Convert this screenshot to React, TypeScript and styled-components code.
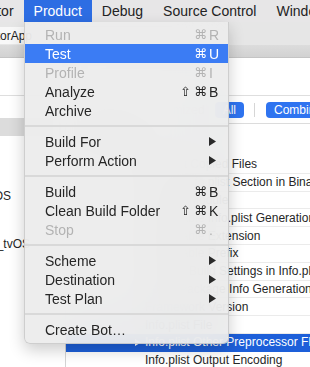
import React from "react";
import styled, { createGlobalStyle } from "styled-components";

const GlobalStyle = createGlobalStyle`
  html, body {
    margin: 0;
    padding: 0;
    background: #fff;
  }
  body {
    font-family: "Liberation Sans", "DejaVu Sans", Arial, sans-serif;
  }
`;

type MenuEntry =
  | "separator"
  | {
      label: string;
      mods?: string[];
      hotkey?: string;
      disabled?: boolean;
      highlighted?: boolean;
      submenu?: boolean;
    };

const productMenu: MenuEntry[] = [
  { label: "Run", mods: ["⌘"], hotkey: "R", disabled: true },
  { label: "Test", mods: ["⌘"], hotkey: "U", highlighted: true },
  { label: "Profile", mods: ["⌘"], hotkey: "I", disabled: true },
  { label: "Analyze", mods: ["⇧", "⌘"], hotkey: "B" },
  { label: "Archive" },
  "separator",
  { label: "Build For", submenu: true },
  { label: "Perform Action", submenu: true },
  "separator",
  { label: "Build", mods: ["⌘"], hotkey: "B" },
  { label: "Clean Build Folder", mods: ["⇧", "⌘"], hotkey: "K" },
  { label: "Stop", mods: ["⌘"], hotkey: ".", disabled: true },
  "separator",
  { label: "Scheme", submenu: true },
  { label: "Destination", submenu: true },
  { label: "Test Plan", submenu: true },
  "separator",
  { label: "Create Bot…" },
];

const settings = [
  "Convert Copied Files",
  "Create Info.plist Section in Binary",
  "Defines Module",
  "Executable Info.plist Generation",
  "Executable Extension",
  "Executable Prefix",
  "Expand Build Settings in Info.plist File",
  "Force Package Info Generation",
  "Framework Version",
  "Info.plist File",
  "Info.plist Other Preprocessor Flags",
  "Info.plist Output Encoding",
];
const selectedSetting = "Info.plist Other Preprocessor Flags";

const SubmenuArrow = () => (
  <svg width="7" height="9" viewBox="0 0 7 9">
    <path d="M0 0 L7 4.5 L0 9 Z" fill="#2a2a2a" />
  </svg>
);

const DisclosureArrow = () => (
  <svg width="6" height="7" viewBox="0 0 6 7">
    <path d="M0 0 L6 3.5 L0 7 Z" fill="#fff" />
  </svg>
);

const App = () => {
  return (
    <>
      <GlobalStyle />
      <Screen>
        <MenuBar>
          <MenuTitle>Editor</MenuTitle>
          <MenuTitle $open>Product</MenuTitle>
          <MenuTitle>Debug</MenuTitle>
          <MenuTitle>Source Control</MenuTitle>
          <MenuTitle>Window</MenuTitle>
        </MenuBar>

        <Toolbar>
          <SchemeField>CalculatorApp</SchemeField>
        </Toolbar>
        <TabBar />

        <Body>
          <TargetList>
            <PaneHeader />
            <TargetRow $selected>
              <TargetName $end={0}>PROJECT</TargetName>
            </TargetRow>
            <TargetRow />
            <TargetRow />
            <TargetRow>
              <TargetName $end={11}>CalculatorApp_macOS</TargetName>
            </TargetRow>
            <TargetRow />
            <TargetRow>
              <TargetName $end={30}>CalculatorApp_tvOS</TargetName>
            </TargetRow>
          </TargetList>

          <SettingsPane>
            <PaneHeader />
            <FilterBar>
              <FilterGroup $width={178}>
                <FilterButton>Basic</FilterButton>
                <FilterButton>Customized</FilterButton>
                <FilterButton $active>All</FilterButton>
              </FilterGroup>
              <FilterDivider />
              <FilterGroup>
                <FilterButton $active>Combined</FilterButton>
                <FilterButton>Levels</FilterButton>
              </FilterGroup>
            </FilterBar>
            <SectionHeader>Packaging</SectionHeader>
            {settings.map((name) => (
              <SettingRow key={name} $selected={name === selectedSetting}>
                <Disclosure>
                  {name === selectedSetting && <DisclosureArrow />}
                </Disclosure>
                {name}
              </SettingRow>
            ))}
          </SettingsPane>
        </Body>

        <Dropdown>
          {productMenu.map((entry, i) =>
            entry === "separator" ? (
              <Separator key={i} />
            ) : (
              <MenuItem
                key={entry.label}
                $disabled={entry.disabled}
                $highlighted={entry.highlighted}
              >
                <ItemLabel>{entry.label}</ItemLabel>
                {entry.hotkey && (
                  <Shortcut>
                    {entry.mods?.map((m) => (
                      <Mod key={m}>{m}</Mod>
                    ))}
                    <Hotkey>{entry.hotkey}</Hotkey>
                  </Shortcut>
                )}
                {entry.submenu && (
                  <ArrowWrap>
                    <SubmenuArrow />
                  </ArrowWrap>
                )}
              </MenuItem>
            )
          )}
        </Dropdown>
      </Screen>
    </>
  );
};

export default App;

const Screen = styled.div`
  position: relative;
  width: 310px;
  height: 367px;
  overflow: hidden;
  background: #fff;
  color: #262626;
`;

const MenuBar = styled.div`
  display: flex;
  height: 22px;
  margin-left: -33px;
  background: #e7e6e7;
  font-size: 14px;
`;

const MenuTitle = styled.div<{ $open?: boolean }>`
  padding: 0 10px;
  line-height: 22px;
  white-space: nowrap;
  color: ${(p) => (p.$open ? "#fff" : "#232323")};
  background: ${(p) => (p.$open ? "#2d6de3" : "transparent")};
`;

const Toolbar = styled.div`
  height: 23px;
  display: flex;
  align-items: flex-end;
  background: #e6e6e6;
`;

const SchemeField = styled.div`
  width: 44px;
  height: 17px;
  margin-bottom: 1px;
  box-sizing: border-box;
  padding-right: 12px;
  display: flex;
  justify-content: flex-end;
  align-items: center;
  overflow: hidden;
  white-space: nowrap;
  background: #f8f8f8;
  border-radius: 0 4px 4px 0;
  font-size: 12px;
  color: #222;
`;

const TabBar = styled.div`
  height: 13px;
  box-sizing: border-box;
  background: linear-gradient(#dcdcdc, #d2d2d2);
  border-bottom: 1px solid #c4c4c4;
`;

const Body = styled.div`
  display: flex;
  height: 309px;
`;

const TargetList = styled.div`
  width: 66px;
  flex: none;
  box-sizing: border-box;
  border-right: 1px solid #d4d4d4;
  display: flex;
  flex-direction: column;
`;

const PaneHeader = styled.div`
  height: 38px;
  flex: none;
  box-sizing: border-box;
  border-bottom: 1px solid #dedede;
`;

const TargetRow = styled.div<{ $selected?: boolean }>`
  height: ${(p) => (p.$selected ? "18px" : "24px")};
  margin-top: ${(p) => (p.$selected ? "22px" : "0")};
  flex: none;
  display: flex;
  align-items: center;
  background: ${(p) => (p.$selected ? "#dcdcdc" : "transparent")};
  font-size: 12px;
`;

const TargetName = styled.div<{ $end: number }>`
  width: ${(p) => p.$end}px;
  display: flex;
  justify-content: flex-end;
  overflow: hidden;
  white-space: nowrap;
`;

const SettingsPane = styled.div`
  flex: 1;
  display: flex;
  flex-direction: column;
`;

const FilterBar = styled.div`
  height: 28px;
  flex: none;
  box-sizing: border-box;
  border-bottom: 1px solid #dcdcdc;
  display: flex;
  align-items: center;
`;

const FilterGroup = styled.div<{ $width?: number }>`
  display: flex;
  align-items: center;
  justify-content: flex-end;
  gap: 2px;
  flex: none;
  width: ${(p) => (p.$width ? `${p.$width}px` : "auto")};
`;

const FilterButton = styled.div<{ $active?: boolean }>`
  height: 16px;
  padding: 0 8px;
  border-radius: 4px;
  display: flex;
  align-items: center;
  font-size: 12px;
  white-space: nowrap;
  color: ${(p) => (p.$active ? "#fff" : "#333")};
  background: ${(p) => (p.$active ? "#2f74f0" : "transparent")};
`;

const FilterDivider = styled.div`
  width: 1px;
  height: 14px;
  margin: 0 11px 0 10px;
  background: #d6d6d6;
`;

const SectionHeader = styled.div`
  height: 32px;
  flex: none;
  display: flex;
  align-items: center;
  padding-left: 10px;
  font-size: 12px;
  font-weight: bold;
`;

const SettingRow = styled.div<{ $selected?: boolean }>`
  height: 17.8px;
  flex: none;
  box-sizing: border-box;
  display: flex;
  align-items: center;
  padding-left: 69px;
  font-size: 12px;
  white-space: nowrap;
  border-bottom: 1px solid ${(p) => (p.$selected ? "#1d5fd9" : "#ebebeb")};
  background: ${(p) => (p.$selected ? "#1d5fd9" : "transparent")};
  color: ${(p) => (p.$selected ? "#fff" : "#262626")};
`;

const Disclosure = styled.span`
  width: 10px;
  flex: none;
  display: flex;
  align-items: center;
`;

const Dropdown = styled.div`
  position: absolute;
  top: 22px;
  left: 24px;
  width: 205px;
  box-sizing: border-box;
  padding: 3px 0 4px;
  background: rgba(236, 236, 236, 0.93);
  backdrop-filter: blur(24px);
  border: 1px solid rgba(0, 0, 0, 0.13);
  border-top: none;
  border-radius: 0 0 6px 6px;
  box-shadow: 0 6px 16px rgba(0, 0, 0, 0.2);
  font-size: 14px;
`;

const MenuItem = styled.div<{ $disabled?: boolean; $highlighted?: boolean }>`
  height: 19px;
  display: flex;
  align-items: center;
  padding: 0 10px 0 20px;
  white-space: nowrap;
  color: ${(p) =>
    p.$highlighted ? "#fff" : p.$disabled ? "#b3b3b3" : "#262626"};
  background: ${(p) => (p.$highlighted ? "#3b7cf4" : "transparent")};
`;

const ItemLabel = styled.span`
  flex: 1;
`;

const Shortcut = styled.span`
  display: flex;
  align-items: center;
  gap: 3px;
`;

const Mod = styled.span`
  font-family: "DejaVu Sans", sans-serif;
  font-size: 13px;
`;

const Hotkey = styled.span`
  width: 9px;
  margin-left: -1px;
  text-align: left;
`;

const ArrowWrap = styled.span`
  display: flex;
  margin-right: 2px;
`;

const Separator = styled.div`
  height: 2px;
  margin: 5px 0;
  background: #d9d9d9;
`;
